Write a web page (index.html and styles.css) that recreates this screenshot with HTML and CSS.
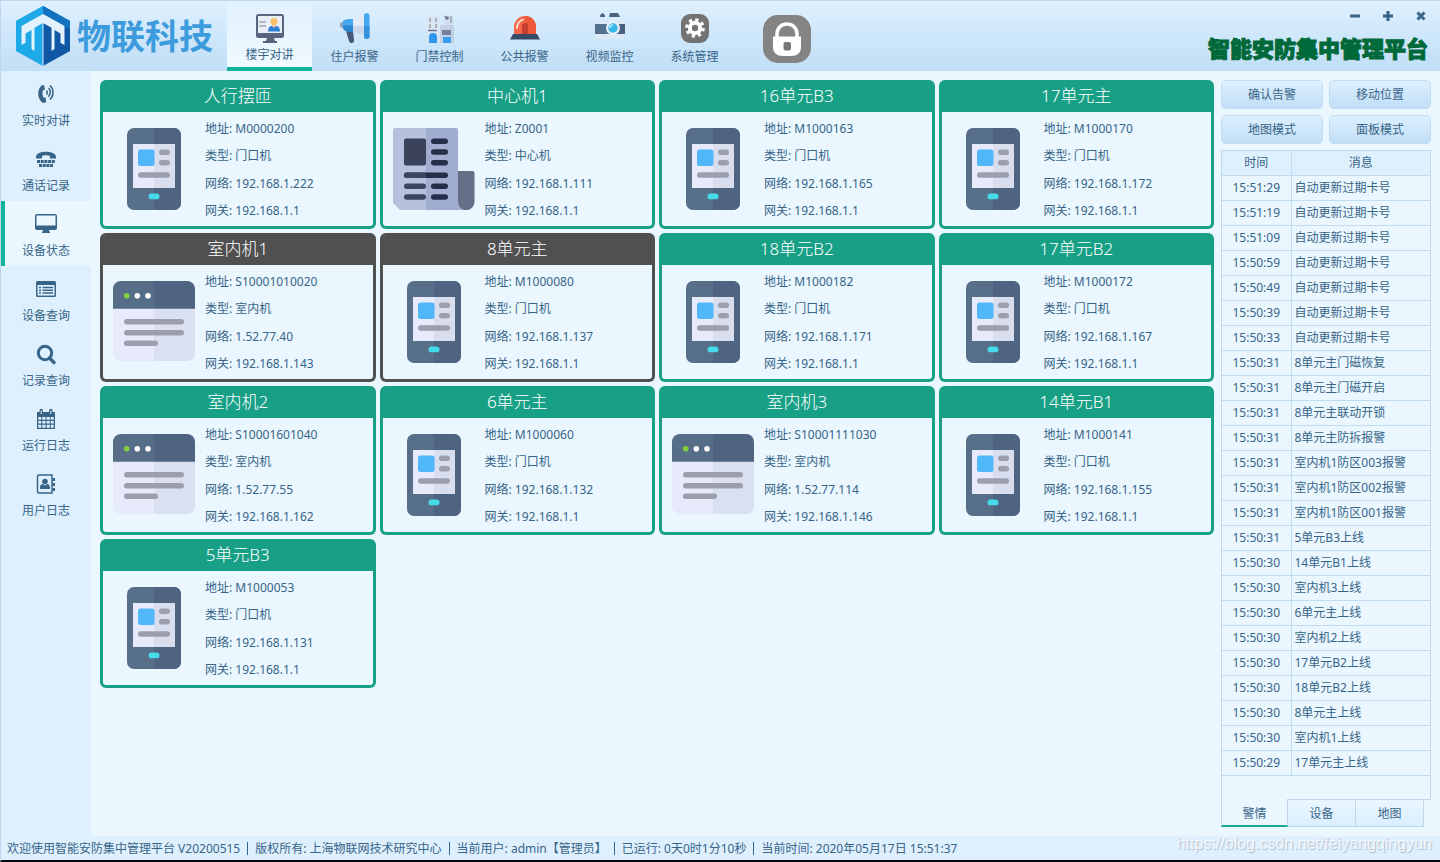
FILE: index.html
```html
<!DOCTYPE html>
<html lang="zh-CN">
<head>
    <meta charset="UTF-8">
    <meta name="viewport" content="width=device-width, initial-scale=1.0">
    <title>智能安防集中管理平台</title>
    <link rel="stylesheet" href="styles.css">
</head>
<body>
    <!-- 图标定义 -->
    <svg class="sprite" aria-hidden="true">
        <symbol id="door" viewBox="0 0 82 82">
            <rect x="14" width="54" height="82" rx="7" fill="#586f89"/>
            <path d="M41 0h20a7 7 0 0 1 7 7v68a7 7 0 0 1-7 7H41z" fill="#4e6480"/>
            <path d="M20 16h21v44H20z" fill="#e6eafb"/>
            <path d="M41 16h21v44H41z" fill="#d9deef"/>
            <rect x="25" y="21.500" width="16.500" height="16.500" rx="2.500" fill="#50b7fa"/>
            <g fill="#9b9fad">
                <rect x="46" y="21.500" width="11" height="5.500" rx="2.700"/>
                <rect x="46" y="32" width="11" height="5.500" rx="2.700"/>
                <rect x="25" y="44.300" width="32" height="5.500" rx="2.700"/>
            </g>
            <rect x="35.500" y="65.500" width="11" height="5.800" rx="2.900" fill="#46dbea"/>
        </symbol>
        <symbol id="center" viewBox="0 0 82 82">
            <path d="M2 0h31v82H7l-7-7V2a2 2 0 0 1 2-2z" fill="#b6c1de"/>
            <path d="M33 0h30a2 2 0 0 1 2 2v73l8 7H33z" fill="#a1adcf"/>
            <path d="M65 43h14.500a2 2 0 0 1 2 2v29a8.200 8.200 0 0 1-16.500 0z" fill="#656f87"/>
            <rect x="11" y="10.500" width="22" height="27" rx="2" fill="#3a4359"/>
            <g fill="#242e49">
                <rect x="38" y="10.500" width="17" height="5.500" rx="2.700"/>
                <rect x="38" y="21.300" width="17" height="5.500" rx="2.700"/>
                <rect x="38" y="32" width="17" height="5.500" rx="2.700"/>
                <rect x="11" y="44.500" width="44" height="5.500" rx="2.700"/>
                <rect x="38" y="55.500" width="17" height="5.500" rx="2.700"/>
                <rect x="38" y="66.300" width="17" height="5.500" rx="2.700"/>
            </g>
            <g fill="#3b455c">
                <path d="M13.700 44.500H33V50H13.700a2.700 2.700 0 0 1 0-5.500z"/>
                <rect x="11" y="55.500" width="22" height="5.500" rx="2.700"/>
                <rect x="11" y="66.300" width="22" height="5.500" rx="2.700"/>
            </g>
        </symbol>
        <symbol id="indoor" viewBox="0 0 82 82">
            <rect y="0" width="82" height="80" rx="8" fill="#e6eafb"/>
            <path d="M41 20h41v52a8 8 0 0 1-8 8H41z" fill="#dae0ef"/>
            <path d="M0 27.700V8a8 8 0 0 1 8-8h33v27.700z" fill="#566d87"/>
            <path d="M41 0h33a8 8 0 0 1 8 8v19.700H41z" fill="#4e6480"/>
            <circle cx="13.700" cy="14.700" r="2.800" fill="#84cc3d"/>
            <circle cx="24.300" cy="14.700" r="2.800" fill="#fff"/>
            <circle cx="35" cy="14.700" r="2.800" fill="#fff"/>
            <g fill="#9b9fad">
                <rect x="11" y="38" width="60" height="5.500" rx="2.700"/>
                <rect x="11" y="49" width="60" height="5.500" rx="2.700"/>
                <rect x="11" y="59.500" width="34" height="5.500" rx="2.700"/>
            </g>
        </symbol>
    </svg>

    <div class="window">
        <header class="header">
            <div class="brand">
                <svg width="54" height="60" viewBox="0 0 54 60">
                    <path d="M27 0v60L0 45V15z" fill="#1ea9e8"/>
                    <path d="M27 0v60l27-15V15z" fill="#1058a6"/>
                    <path d="M27 0l27 15-7 4.500L27 8 5 19.500 0 15z" fill="#1ea9e8"/>
                    <path d="M27 0l27 15v8L27 8z" fill="#1272bd"/>
                    <path d="M27 8l21.500 12v19l-4-2.200V27.500L38.500 24v19l-3 2V21.700L27 17l-8.500 4.700V45l-3-2V24l-6 3.500v9.300l-4 2.200V20z" fill="#e4f2fe"/>
                    <path d="M27 17v43" stroke="#d5e9fa" stroke-width="1"/>
                </svg>
                <strong class="brand-name">物联科技</strong>
            </div>

            <nav class="nav">
                <a href="#" class="nav-item active">
                    <svg width="30" height="30" viewBox="0 0 30 30">
                        <rect x="1" y="1" width="28" height="24" rx="2.500" fill="#59647e"/>
                        <rect x="3" y="3" width="24" height="17" fill="#e9edf6"/>
                        <path d="M4 9h7M4 13h7" stroke="#7b8598" stroke-width="1.200"/>
                        <path d="M12 25h7l1 3h2v2H8v-2h3z" fill="#59647e"/>
                        <path d="M13 18.500c0-4 2-6 6-6s6 2 6 6z" fill="#2f7ed6"/>
                        <path d="M17 10h4v3l-2 2-2-2z" fill="#f6c79a"/>
                        <circle cx="19" cy="8.500" r="3.500" fill="#fbc065"/>
                    </svg>
                    <span>楼宇对讲</span>
                </a>
                <a href="#" class="nav-item">
                    <svg width="30" height="30" viewBox="0 0 30 30">
                        <path d="M6 18h7l1 9a2.500 2.500 0 0 1-5 1z" fill="#455a78"/>
                        <path d="M3 8c1.500-1.500 4-2 10-2v13C7 19 4.500 18 3 16z" fill="#46a6ee"/>
                        <path d="M3 12.500h10V19C6 19 3 17.500 3 12.500z" fill="#2c86d1"/>
                        <path d="M0 10l3-1v6l-3-1z" fill="#91a3ba"/>
                        <path d="M13 6l11-4v20l-11-3z" fill="#e3ebf8"/>
                        <path d="M13 13h11v9l-11-3z" fill="#cbd8ec"/>
                        <rect x="24" width="5.500" height="26" rx="2.700" fill="#45a9f0"/>
                        <path d="M24 13h5.500v10.300a2.700 2.700 0 0 1-5.500 0z" fill="#3492dd"/>
                    </svg>
                    <span>住户报警</span>
                </a>
                <a href="#" class="nav-item">
                    <svg width="30" height="30" viewBox="0 0 30 30">
                        <path d="M2 3h12v27H2z" fill="#dae5f4"/>
                        <path d="M15 12h14v18H15z" fill="#c3d0e3"/>
                        <path d="M19 3h9v9h-9z" fill="#d3deed"/>
                        <path d="M5 5v4M11 5v4M5 11v4M11 11v4" stroke="#a5a3ac" stroke-width="1.600"/>
                        <path d="M3 17.500h9" stroke="#66758f" stroke-width="1.500"/>
                        <path d="M4 30v-6a4 4 0 0 1 8 0v6z" fill="#3198ed"/>
                        <path d="M17 17h9v5h-9z" fill="#71809b"/>
                        <path d="M18 24h8v6h-8z" fill="#389bed"/>
                        <path d="M19 3l3 2M26 3v7" stroke="#8794a9" stroke-width="1.200" fill="none"/>
                        <circle cx="22" cy="5" r="1.800" fill="#65758e"/>
                    </svg>
                    <span>门禁控制</span>
                </a>
                <a href="#" class="nav-item">
                    <svg width="30" height="30" viewBox="0 0 30 30">
                        <path d="M4 23V14a11 11 0 0 1 22 0v9z" fill="#f76747"/>
                        <path d="M15 3a11 11 0 0 1 11 11v9H15z" fill="#ee5738"/>
                        <path d="M12 22V13a3 3 0 0 1 6 0v9z" fill="#c7402f"/>
                        <path d="M7 15c0-5 2-7 6-8.500" stroke="#ffe5dc" stroke-width="1.800" fill="none" stroke-linecap="round"/>
                        <path d="M3 21h24l3 5.500H0z" fill="#344b67"/>
                    </svg>
                    <span>公共报警</span>
                </a>
                <a href="#" class="nav-item">
                    <svg width="30" height="30" viewBox="0 0 30 30">
                        <path d="M1 8h28v18H1z" fill="#dde8f7"/>
                        <path d="M5 4c0-5 5-5 5 0zM14 4l1-4h8l2 4z" fill="#4d6280"/>
                        <path d="M0 11h30v10H0z" fill="#54708f"/>
                        <path d="M18 11h12v10H18z" fill="#48617f"/>
                        <circle cx="18" cy="15" r="7" fill="#e8edf8"/>
                        <circle cx="18" cy="15" r="4.700" fill="#35b7e8"/>
                        <path d="M15 15a3 3 0 0 1 3-3" stroke="#b7efff" stroke-width="1.500" fill="none"/>
                    </svg>
                    <span>视频监控</span>
                </a>
                <a href="#" class="nav-item">
                    <svg width="30" height="30" viewBox="0 0 30 30">
                        <rect x="1" y="1" width="28" height="29" rx="9" fill="#737373"/>
                        <circle cx="15" cy="15" r="8.200" fill="none" stroke="#fff" stroke-width="3.200" stroke-dasharray="3.200 3.240"/>
                        <circle cx="15" cy="15" r="5.200" fill="none" stroke="#fff" stroke-width="4"/>
                    </svg>
                    <span>系统管理</span>
                </a>
            </nav>

            <button class="lock-btn" type="button" aria-label="锁定">
                <svg width="48" height="48" viewBox="0 0 48 48">
                    <rect width="48" height="48" rx="15" fill="#848484"/>
                    <path d="M14 24v-5.500a10 9.500 0 0 1 20 0V24" fill="none" stroke="#fff" stroke-width="3.500"/>
                    <path d="M10 21.500h28V32c0 6-4 9-10 9h-8c-6 0-10-3-10-9z" fill="#fff"/>
                    <rect x="20.500" y="27" width="7.500" height="8.500" rx="2" fill="#777"/>
                </svg>
            </button>

            <div class="header-right">
                <div class="win-btns">
                    <button type="button" aria-label="最小化"><svg width="10" height="10" viewBox="0 0 10 10"><path d="M0 5h10"/></svg></button>
                    <button type="button" aria-label="最大化"><svg width="10" height="10" viewBox="0 0 10 10"><path d="M0 5h10M5 0v10"/></svg></button>
                    <button type="button" aria-label="关闭"><svg width="10" height="10" viewBox="0 0 10 10"><path d="M1.500 1.500l7 7M8.500 1.500l-7 7"/></svg></button>
                </div>
                <h1 class="title">智能安防集中管理平台</h1>
            </div>
        </header>

        <div class="content">
            <nav class="sidebar">
                <a href="#" class="side-item">
                    <svg width="22" height="22" viewBox="0 0 22 22">
                        <path d="M6.500 2.500L9 2l1 4.500-2.200 1c-.6 2.500-.4 4.500.6 7l2.400.2.200 4.600-2.500.7C3 18.500 1 7 6.500 2.500z"/>
                        <path class="line" d="M11.500 7.500c1 1 1 3 0 4M13.500 5c2.300 2 2.300 6.500 0 8.800M15 2.500c4 3.500 4 10.500 0 14"/>
                    </svg>
                    <span>实时对讲</span>
                </a>
                <a href="#" class="side-item">
                    <svg width="22" height="22" viewBox="0 0 22 22">
                        <path d="M1 9c0-7 20-7 20 0v1.500h-6V8c-2-1-6-1-8 0v2.500H1z"/>
                        <path class="dots" d="M2 13.500h18M4 17.500h14"/>
                    </svg>
                    <span>通话记录</span>
                </a>
                <a href="#" class="side-item active">
                    <svg width="22" height="22" viewBox="0 0 22 22">
                        <path fill-rule="evenodd" d="M2 1h18a2 2 0 0 1 2 2v12a2 2 0 0 1-2 2h-6v1.500h1V20H7v-1.500h1V17H2a2 2 0 0 1-2-2V3a2 2 0 0 1 2-2zm-.500 1.500v10h19v-10z"/>
                    </svg>
                    <span>设备状态</span>
                </a>
                <a href="#" class="side-item">
                    <svg width="22" height="22" viewBox="0 0 22 22">
                        <path fill-rule="evenodd" d="M2.500 3h17A1.500 1.500 0 0 1 21 4.500v13a1.500 1.500 0 0 1-1.500 1.500h-17A1.500 1.500 0 0 1 1 17.500v-13A1.500 1.500 0 0 1 2.500 3zm0 4v10.500h17V7z"/>
                        <path class="line" d="M4 9.500h2M7.500 9.500H18M4 12.300h2M7.500 12.300H18M4 15h2M7.500 15H18"/>
                    </svg>
                    <span>设备查询</span>
                </a>
                <a href="#" class="side-item">
                    <svg width="22" height="22" viewBox="0 0 22 22">
                        <circle cx="10" cy="10" r="6.700" fill="none" stroke="#386487" stroke-width="3"/>
                        <path d="M14.500 15l4.500 4.500" stroke="#386487" stroke-width="3.400" stroke-linecap="round"/>
                    </svg>
                    <span>记录查询</span>
                </a>
                <a href="#" class="side-item">
                    <svg width="22" height="22" viewBox="0 0 22 22">
                        <path fill-rule="evenodd" d="M2 4h2.500V2.500a1.700 1.700 0 0 1 3.400 0V4h6.200V2.500a1.700 1.700 0 0 1 3.400 0V4H20v17H2zm1.300 5v2.800h2.900V9zm4 0v2.800h3.200V9zm4.300 0v2.800h3.200V9zm4.200 0v2.800h2.900V9zM3.300 12.900v2.700h2.900v-2.700zm4 0v2.700h3.200v-2.700zm4.300 0v2.700h3.200v-2.700zm4.200 0v2.700h2.900v-2.700zM3.300 16.800v2.900h2.900v-2.900zm4 0v2.900h3.200v-2.900zm4.300 0v2.900h3.200v-2.900zm4.200 0v2.900h2.900v-2.900z"/>
                        <path d="M6.200 2.500v3.500M15.800 2.500v3.500" stroke="#def0fe"/>
                    </svg>
                    <span>运行日志</span>
                </a>
                <a href="#" class="side-item">
                    <svg width="22" height="22" viewBox="0 0 22 22">
                        <path class="line" d="M4 2h13v18H4a1.500 1.500 0 0 1-1.500-1.500v-15A1.500 1.500 0 0 1 4 2z"/>
                        <path d="M17.500 5H20v3h-2.500zM17.500 10H20v3h-2.500zM17.500 15H20v3h-2.500z"/>
                        <circle cx="10" cy="8.500" r="2.800"/>
                        <path d="M5 16v-1.500c0-2.500 1.500-3.500 3-3.500l2 1.500 2-1.500c1.500 0 3 1 3 3.500V16z"/>
                    </svg>
                    <span>用户日志</span>
                </a>
            </nav>

            <main class="cards">
                <article class="card">
                    <h2>人行摆匝</h2>
                    <div class="card-body">
                        <svg class="device"><use href="#door"/></svg>
                        <ul><li>地址: M0000200</li><li>类型: 门口机</li><li>网络: 192.168.1.222</li><li>网关: 192.168.1.1</li></ul>
                    </div>
                </article>
                <article class="card">
                    <h2>中心机1</h2>
                    <div class="card-body">
                        <svg class="device"><use href="#center"/></svg>
                        <ul><li>地址: Z0001</li><li>类型: 中心机</li><li>网络: 192.168.1.111</li><li>网关: 192.168.1.1</li></ul>
                    </div>
                </article>
                <article class="card">
                    <h2>16单元B3</h2>
                    <div class="card-body">
                        <svg class="device"><use href="#door"/></svg>
                        <ul><li>地址: M1000163</li><li>类型: 门口机</li><li>网络: 192.168.1.165</li><li>网关: 192.168.1.1</li></ul>
                    </div>
                </article>
                <article class="card">
                    <h2>17单元主</h2>
                    <div class="card-body">
                        <svg class="device"><use href="#door"/></svg>
                        <ul><li>地址: M1000170</li><li>类型: 门口机</li><li>网络: 192.168.1.172</li><li>网关: 192.168.1.1</li></ul>
                    </div>
                </article>
                <article class="card offline">
                    <h2>室内机1</h2>
                    <div class="card-body">
                        <svg class="device"><use href="#indoor"/></svg>
                        <ul><li>地址: S10001010020</li><li>类型: 室内机</li><li>网络: 1.52.77.40</li><li>网关: 192.168.1.143</li></ul>
                    </div>
                </article>
                <article class="card offline">
                    <h2>8单元主</h2>
                    <div class="card-body">
                        <svg class="device"><use href="#door"/></svg>
                        <ul><li>地址: M1000080</li><li>类型: 门口机</li><li>网络: 192.168.1.137</li><li>网关: 192.168.1.1</li></ul>
                    </div>
                </article>
                <article class="card">
                    <h2>18单元B2</h2>
                    <div class="card-body">
                        <svg class="device"><use href="#door"/></svg>
                        <ul><li>地址: M1000182</li><li>类型: 门口机</li><li>网络: 192.168.1.171</li><li>网关: 192.168.1.1</li></ul>
                    </div>
                </article>
                <article class="card">
                    <h2>17单元B2</h2>
                    <div class="card-body">
                        <svg class="device"><use href="#door"/></svg>
                        <ul><li>地址: M1000172</li><li>类型: 门口机</li><li>网络: 192.168.1.167</li><li>网关: 192.168.1.1</li></ul>
                    </div>
                </article>
                <article class="card">
                    <h2>室内机2</h2>
                    <div class="card-body">
                        <svg class="device"><use href="#indoor"/></svg>
                        <ul><li>地址: S10001601040</li><li>类型: 室内机</li><li>网络: 1.52.77.55</li><li>网关: 192.168.1.162</li></ul>
                    </div>
                </article>
                <article class="card">
                    <h2>6单元主</h2>
                    <div class="card-body">
                        <svg class="device"><use href="#door"/></svg>
                        <ul><li>地址: M1000060</li><li>类型: 门口机</li><li>网络: 192.168.1.132</li><li>网关: 192.168.1.1</li></ul>
                    </div>
                </article>
                <article class="card">
                    <h2>室内机3</h2>
                    <div class="card-body">
                        <svg class="device"><use href="#indoor"/></svg>
                        <ul><li>地址: S10001111030</li><li>类型: 室内机</li><li>网络: 1.52.77.114</li><li>网关: 192.168.1.146</li></ul>
                    </div>
                </article>
                <article class="card">
                    <h2>14单元B1</h2>
                    <div class="card-body">
                        <svg class="device"><use href="#door"/></svg>
                        <ul><li>地址: M1000141</li><li>类型: 门口机</li><li>网络: 192.168.1.155</li><li>网关: 192.168.1.1</li></ul>
                    </div>
                </article>
                <article class="card">
                    <h2>5单元B3</h2>
                    <div class="card-body">
                        <svg class="device"><use href="#door"/></svg>
                        <ul><li>地址: M1000053</li><li>类型: 门口机</li><li>网络: 192.168.1.131</li><li>网关: 192.168.1.1</li></ul>
                    </div>
                </article>
            </main>

            <aside class="panel">
                <div class="actions">
                    <button type="button">确认告警</button>
                    <button type="button">移动位置</button>
                    <button type="button">地图模式</button>
                    <button type="button">面板模式</button>
                </div>
                <div class="log-box">
                    <table class="log">
                        <thead>
                            <tr><th>时间</th><th>消息</th></tr>
                        </thead>
                        <tbody>
                            <tr><td>15:51:29</td><td>自动更新过期卡号</td></tr>
                            <tr><td>15:51:19</td><td>自动更新过期卡号</td></tr>
                            <tr><td>15:51:09</td><td>自动更新过期卡号</td></tr>
                            <tr><td>15:50:59</td><td>自动更新过期卡号</td></tr>
                            <tr><td>15:50:49</td><td>自动更新过期卡号</td></tr>
                            <tr><td>15:50:39</td><td>自动更新过期卡号</td></tr>
                            <tr><td>15:50:33</td><td>自动更新过期卡号</td></tr>
                            <tr><td>15:50:31</td><td>8单元主门磁恢复</td></tr>
                            <tr><td>15:50:31</td><td>8单元主门磁开启</td></tr>
                            <tr><td>15:50:31</td><td>8单元主联动开锁</td></tr>
                            <tr><td>15:50:31</td><td>8单元主防拆报警</td></tr>
                            <tr><td>15:50:31</td><td>室内机1防区003报警</td></tr>
                            <tr><td>15:50:31</td><td>室内机1防区002报警</td></tr>
                            <tr><td>15:50:31</td><td>室内机1防区001报警</td></tr>
                            <tr><td>15:50:31</td><td>5单元B3上线</td></tr>
                            <tr><td>15:50:30</td><td>14单元B1上线</td></tr>
                            <tr><td>15:50:30</td><td>室内机3上线</td></tr>
                            <tr><td>15:50:30</td><td>6单元主上线</td></tr>
                            <tr><td>15:50:30</td><td>室内机2上线</td></tr>
                            <tr><td>15:50:30</td><td>17单元B2上线</td></tr>
                            <tr><td>15:50:30</td><td>18单元B2上线</td></tr>
                            <tr><td>15:50:30</td><td>8单元主上线</td></tr>
                            <tr><td>15:50:30</td><td>室内机1上线</td></tr>
                            <tr><td>15:50:29</td><td>17单元主上线</td></tr>
                        </tbody>
                    </table>
                </div>
                <div class="tabs">
                    <button type="button" class="active">警情</button>
                    <button type="button">设备</button>
                    <button type="button">地图</button>
                </div>
            </aside>
        </div>

        <footer class="status">
            <span>欢迎使用智能安防集中管理平台 V20200515</span>
            <span>版权所有: 上海物联网技术研究中心</span>
            <span>当前用户: admin【管理员】</span>
            <span>已运行: 0天0时1分10秒</span>
            <span>当前时间: 2020年05月17日 15:51:37</span>
        </footer>
        <div class="watermark">https://blog.csdn.net/feiyangqingyun</div>
    </div>
</body>
</html>
```
FILE: styles.css
```css
* {
    margin: 0;
    padding: 0;
    box-sizing: border-box;
}

body {
    font-family: "Noto Sans", "Noto Sans CJK SC", sans-serif;
    font-size: 12px;
    line-height: 18px;
    color: #386487;
    background: #eaf7ff;
}

a {
    color: inherit;
    text-decoration: none;
}

button {
    font: inherit;
    color: inherit;
    border: none;
    background: none;
    cursor: pointer;
}

ul {
    list-style: none;
}

.sprite {
    display: none;
}

.window {
    position: relative;
    display: flex;
    flex-direction: column;
    min-height: 100vh;
    border-top: 1px solid #c0d5ea;
    border-left: 1px solid #c0d5ea;
    border-bottom: 2px solid #05080c;
}

/* 顶部 */
.header {
    display: flex;
    height: 70px;
    background: linear-gradient(#def0fe, #c0def6);
}

.brand {
    display: flex;
    align-items: center;
    gap: 7px;
    padding: 0 14px 0 15px;
}

.brand-name {
    font-size: 34px;
    line-height: 40px;
    color: #3c9bdc;
}

.nav {
    display: flex;
}

.nav-item {
    display: flex;
    flex-direction: column;
    align-items: center;
    justify-content: space-between;
    width: 85px;
    padding: 12px 0 5px;
}

.nav-item.active {
    padding-bottom: 3px;
    border-bottom: 4px solid #0fb49c;
    background: linear-gradient(#e1f1fe, #f0f9ff);
}

.lock-btn {
    align-self: flex-end;
    height: 48px;
    margin: 0 0 8px 26px;
}

.header-right {
    display: flex;
    flex-direction: column;
    align-items: flex-end;
    margin-left: auto;
}

.win-btns {
    display: flex;
    padding-right: 3px;
}

.win-btns button {
    width: 33px;
    height: 30px;
}

.win-btns svg {
    display: block;
    margin: auto;
    stroke: #386487;
    stroke-width: 3;
}

.title {
    padding-right: 12px;
    font-size: 22px;
    font-weight: 900;
    line-height: 34px;
    color: #00693a;
    -webkit-text-stroke: 1px #00693a;
}

/* 中间区域 */
.content {
    display: flex;
    flex: 1;
}

.sidebar {
    width: 90px;
    background: #def0fe;
}

.side-item {
    display: flex;
    flex-direction: column;
    align-items: center;
    gap: 7px;
    height: 65px;
    padding-top: 12px;
}

.side-item.active {
    padding-right: 4px;
    border-left: 4px solid #0fb49c;
    background: #eaf7ff;
}

.side-item svg {
    fill: #386487;
}

.side-item .line,
.side-item .dots {
    fill: none;
    stroke: #386487;
    stroke-width: 1.5;
}

.side-item .dots {
    stroke-width: 3;
    stroke-dasharray: 3 0.7;
}

.cards {
    flex: 1;
    display: grid;
    grid-template-columns: repeat(4, 1fr);
    gap: 4px;
    align-content: start;
    padding: 9px 7px 9px 9px;
}

.card {
    border: 3px solid #18a086;
    border-top: none;
    border-radius: 6px;
    background: #18a086;
}

.card h2 {
    font-size: 17px;
    font-weight: 300;
    line-height: 32px;
    text-align: center;
    color: #fff;
}

.card-body {
    display: flex;
    align-items: center;
    gap: 10px;
    min-height: 114px;
    padding: 0 10px;
    border-radius: 0 0 3px 3px;
    background: #eaf7ff;
}

.card ul {
    display: grid;
    align-self: stretch;
    align-items: center;
    padding: 3px 0 1px;
}

.offline {
    border-color: #505050;
    background: #505050;
}

.device {
    flex: none;
    width: 82px;
    height: 82px;
}

/* 右侧面板 */
.panel {
    display: flex;
    flex-direction: column;
    width: 219px;
    padding: 9px 9px 9px 0;
}

.actions {
    display: grid;
    grid-template-columns: 1fr 1fr;
    gap: 6px;
    margin-bottom: 6px;
}

.actions button {
    height: 29px;
    border: 1px solid #c0dcf2;
    border-radius: 5px;
    background: linear-gradient(#def0fe, #c0def6);
}

.log-box {
    flex: 1;
    border: 1px solid #c0d8ec;
    border-bottom: none;
}

.log {
    width: 100%;
    border-collapse: collapse;
}

.log th,
.log td {
    height: 25px;
    padding: 0 3px;
    font-weight: 400;
    border-bottom: 1px solid #c0dcf2;
}

.log th {
    height: 24px;
    background: #def0fe;
}

.log th:first-child,
.log td:first-child {
    width: 69px;
    text-align: center;
    border-right: 1px solid #c0dcf2;
}

.tabs {
    display: grid;
    grid-template-columns: 67px 68px 68px 1fr;
    height: 28px;
}

.tabs::after {
    content: "";
    border-top: 1px solid #c0d8ec;
}

.tabs button {
    padding-top: 1px;
    border: 1px solid #c0d8ec;
    border-left: none;
    background: linear-gradient(#eaf7ff, #daeeff);
}

.tabs .active {
    padding-top: 3px;
    border-left: 1px solid #c0d8ec;
    border-top: none;
    border-bottom: 2px solid #1fa898;
    background: none;
}

/* 状态栏 */
.status {
    display: flex;
    align-items: center;
    height: 24px;
    padding: 1px 6px 0;
    background: #def0fe;
}

.status span + span {
    display: flex;
    align-items: center;
}

.status span + span::before {
    content: "";
    height: 13px;
    margin: 0 7px;
    border-left: 1px solid #386487;
}

.watermark {
    position: absolute;
    right: 8px;
    bottom: 7px;
    font-family: "Liberation Sans", sans-serif;
    font-size: 16px;
    color: rgba(255, 255, 255, 0.8);
    text-shadow: 1px 1px 1px rgba(120, 140, 160, 0.5);
}
```
